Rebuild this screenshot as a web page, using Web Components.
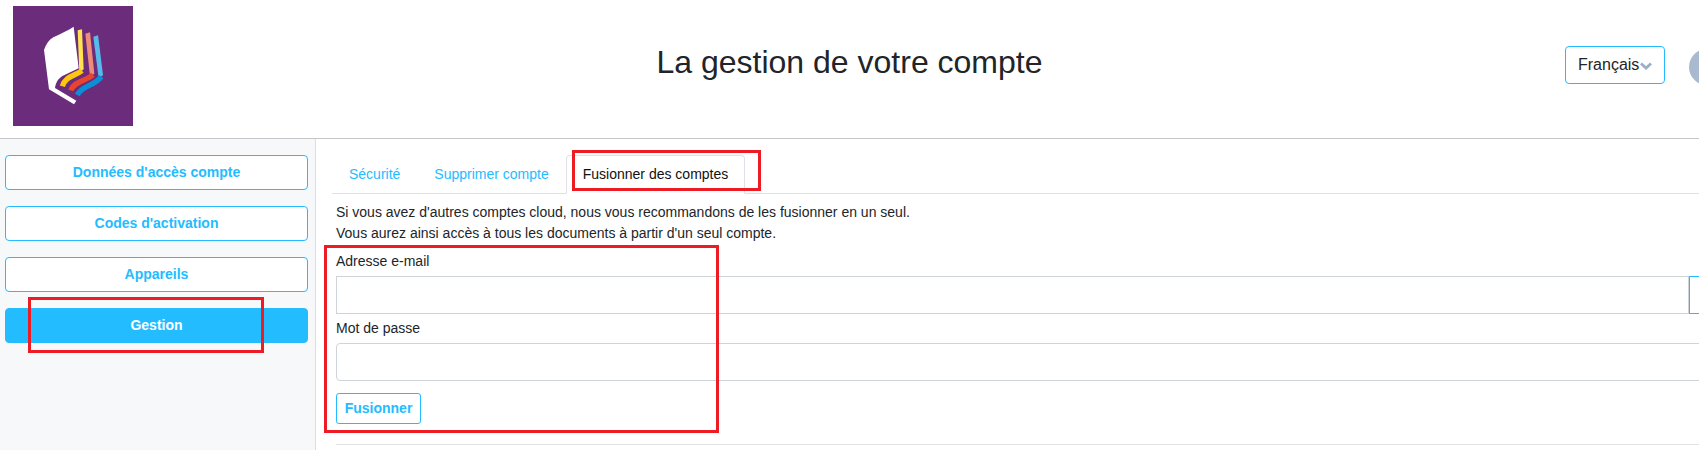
<!DOCTYPE html>
<html lang="fr">
<head>
<meta charset="utf-8">
<title>La gestion de votre compte</title>
<style>
html,body{margin:0;padding:0;height:450px;overflow:hidden;background:#fff;font-family:"Liberation Sans",Arial,sans-serif;font-size:14px;color:#212529}
</style>
</head>
<body>
<account-page>
  <app-header slot="header" title-text="La gestion de votre compte"></app-header>
  <side-nav slot="side">
    <nav-button>Données d'accès compte</nav-button>
    <nav-button>Codes d'activation</nav-button>
    <nav-button>Appareils</nav-button>
    <nav-button active>Gestion</nav-button>
  </side-nav>
  <merge-panel slot="main"></merge-panel>
</account-page>
<note-box style="left:28px;top:297px;width:236px;height:56px"></note-box>
<note-box style="left:572px;top:150px;width:189px;height:41px"></note-box>
<note-box style="left:324px;top:245px;width:395px;height:188px"></note-box>
<script>
function def(name, html, init){
  customElements.define(name, class extends HTMLElement{
    constructor(){super();this.attachShadow({mode:'open'}).innerHTML=html;}
    connectedCallback(){ if(init) init.call(this); }
  });
}
def('account-page',`<style>
:host{display:flex;flex-direction:column;width:1699px;height:450px;overflow:hidden}
.row{display:flex;flex:1;min-height:0}
</style><slot name="header"></slot><div class="row"><slot name="side"></slot><slot name="main"></slot></div>`);

def('app-header',`<style>
:host{display:flex;align-items:flex-start;height:138px;border-bottom:1px solid #c6c6c6;box-sizing:content-box;position:relative;flex:none}
.logo{display:block;width:120px;height:120px;margin:6px 0 0 13px;flex:none}
h1{flex:1;margin:0;padding-top:43px;text-align:center;font:400 32px/38px "Liberation Sans",Arial,sans-serif;color:#212529;position:absolute;left:0;right:0}
.right{margin-left:auto;display:flex;align-items:flex-start;position:relative;gap:24px;padding-top:46px;margin-right:-26px}
.avatar{width:36px;height:36px;border-radius:50%;background:#a9b9d0;margin-top:3px}
</style>
<svg class="logo" viewBox="39 18 360 360" aria-hidden="true">
  <rect x="39" y="18" width="360" height="360" fill="#6b2d7b"/>
  <path d="M221 80C205 92 182 100 160 112C146 120 138 134 132 150L147 268L222 313L229 302L165 264C168 244 178 232 192 226L236 205Z" fill="#fff"/>
  <path d="M233 91L246 88L251 208L238 218Z" fill="#ffe34f"/>
  <path d="M246 212C225 228 196 228 187 259" fill="none" stroke="#fdc70f" stroke-width="16"/>
  <path d="M256 101L270 97L283 221L270 228Z" fill="#ef8c78"/>
  <path d="M279 224C256 244 222 244 212 271" fill="none" stroke="#e8452f" stroke-width="16"/>
  <path d="M280 110L294 106L309 226L296 234Z" fill="#58b9ea"/>
  <path d="M304 230C284 258 246 256 232 285" fill="none" stroke="#0d8fd8" stroke-width="16"/>
</svg>
<h1></h1>
<div class="right"><lang-select>Français</lang-select><div class="avatar"></div></div>`,
function(){this.shadowRoot.querySelector('h1').textContent=this.getAttribute('title-text');});

def('lang-select',`<style>
:host{display:flex;align-items:center;box-sizing:border-box;width:100px;height:38px;padding-left:12px;border:1px solid #23bcff;border-radius:4px;font-size:16px;color:#212529;background:#fff;position:relative;z-index:1}
svg{display:block;width:12px;height:8px;margin:2px 0 0 1px}
</style><slot></slot><svg viewBox="0 0 12 8" aria-hidden="true"><path d="M1 1.5L6 6L11 1.5" fill="none" stroke="#9fb0c6" stroke-width="3"/></svg>`);

def('side-nav',`<style>
:host{display:flex;flex-direction:column;gap:16px;flex:none;box-sizing:border-box;width:316px;padding:16px 7px 0 5px;background:#f7f8fa;border-right:1px solid #dedede}
</style><slot></slot>`);

def('nav-button',`<style>
:host{display:block;box-sizing:border-box;height:35px;line-height:33px;text-align:center;font-weight:700;font-size:14px;color:#23bcff;background:#fff;border:1px solid #23bcff;border-radius:4px}
:host([active]){background:#23bcff;color:#fff}
</style><slot></slot>`);

def('merge-panel',`<style>
:host{display:block;flex:1;min-width:0;box-sizing:border-box;padding:16px 0 0 16px;overflow:hidden}
p{margin:0;padding:8px 0 0 4px;line-height:21px;color:#212529}
.form{padding:7px 0 0 4px}
hr{border:0;border-top:1px solid #e2e3e5;margin:20px 0 0 4px}
.send{margin-top:12px}
form-field+form-field{margin-top:4px}
</style>
<tab-bar>
  <tab-item>Sécurité</tab-item>
  <tab-item>Supprimer compte</tab-item>
  <tab-item active>Fusionner des comptes</tab-item>
</tab-bar>
<p>Si vous avez d'autres comptes cloud, nous vous recommandons de les fusionner en un seul.<br>Vous aurez ainsi accès à tous les documents à partir d'un seul compte.</p>
<div class="form">
  <form-field label="Adresse e-mail" square addon></form-field>
  <form-field label="Mot de passe" type="password"></form-field>
  <small-button class="send">Fusionner</small-button>
</div>
<hr>`);

def('tab-bar',`<style>
:host{display:flex;height:38px;border-bottom:1px solid #dee2e6;box-sizing:content-box;width:calc(100% + 20px)}
</style><slot></slot>`);

def('tab-item',`<style>
:host{display:block;box-sizing:border-box;height:39px;padding:0 16px;line-height:36px;border:1px solid transparent;border-radius:4px 4px 0 0;color:#23bcff;font-size:14px}
:host([active]){color:#111;background:#fff;border-color:#dee2e6 #dee2e6 #fff}
</style><slot></slot>`);

def('form-field',`<style>
:host{display:block;width:1383px}
label{display:block;line-height:21px;margin-bottom:4px;color:#212529}
.row{display:flex}
input{flex:1;min-width:0;box-sizing:border-box;height:38px;border:1px solid #ced4da;border-radius:4px;background:#fff;margin:0;padding:0 12px;outline:0}
:host([square]) input{border-radius:0}
.addon{width:30px;flex:none;box-sizing:border-box;height:38px;border:1px solid #23bcff;background:#fff;margin-left:0}
:host(:not([addon])) .addon{display:none}
</style><label></label><div class="row"><input><div class="addon"></div></div>`,
function(){
  this.shadowRoot.querySelector('label').textContent=this.getAttribute('label');
  if(this.getAttribute('type')) this.shadowRoot.querySelector('input').type=this.getAttribute('type');
});

def('small-button',`<style>
:host{display:block;box-sizing:border-box;width:85px;height:31px;line-height:29px;text-align:center;font-weight:700;font-size:14px;color:#23bcff;background:#fff;border:1px solid #23bcff;border-radius:3px}
</style><slot></slot>`);

def('note-box',`<style>
:host{display:block;position:absolute;box-sizing:border-box;border:3px solid #ed1c24;pointer-events:none}
</style>`);
</script>
</body>
</html>
